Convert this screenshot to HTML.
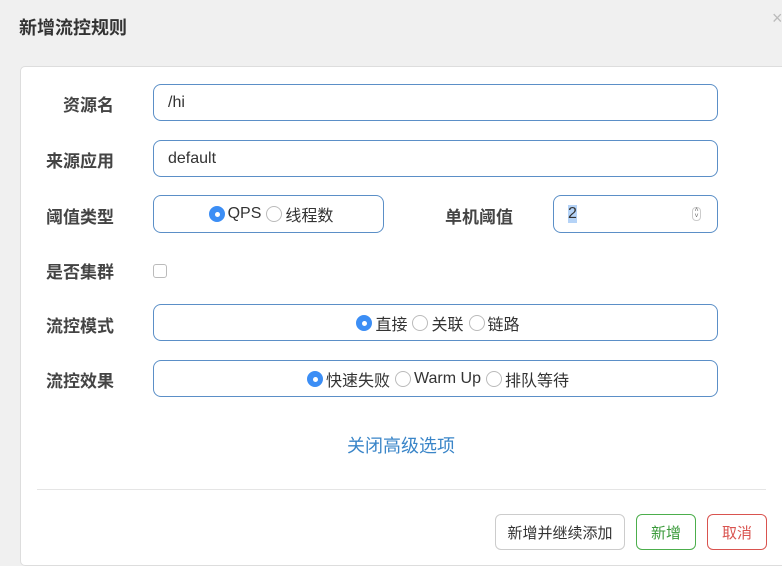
<!DOCTYPE html>
<html><head><meta charset="utf-8"><style>
*{box-sizing:border-box;margin:0;padding:0}
body{width:782px;height:561px;overflow:hidden;background:#f0f0f0;font-family:"Liberation Sans","Noto Sans CJK SC",sans-serif;position:relative;color:#333}
.a{position:absolute}
.title{left:19px;top:14px;font-size:18px;font-weight:bold;color:#333}
.panel{left:20px;top:66px;width:770px;height:500px;background:#fff;border:1px solid #ddd;border-radius:5px}
.lbl{font-size:17px;font-weight:bold;color:#444}
.box{border:1.5px solid #5b8fc7;border-radius:8px;background:#fff;font-size:16px;color:#333;display:flex;align-items:center}
.r{display:inline-block;width:16px;height:16px;border-radius:50%;border:1px solid #bbb;margin-right:3px;margin-left:5px;background:#fff;flex:none}
.r.on{background:#3c8ef5;border-color:#3c8ef5;position:relative}
.r.on:after{content:"";position:absolute;left:5px;top:5px;width:5px;height:5px;border-radius:50%;background:#fff}
.btn{border-radius:6px;font-size:15px;display:flex;align-items:center;justify-content:center;background:#fff}
</style></head><body>
<div class="a title">新增流控规则</div>
<div class="a" style="left:772px;top:8px;color:#bbb;font-size:18px">×</div>
<div class="a panel"></div>
<div class="a lbl" style="left:63px;top:91px">资源名</div>
<div class="a box" style="left:153px;top:84px;width:565px;height:37px;padding-left:14px">/hi</div>
<div class="a lbl" style="left:46px;top:147px">来源应用</div>
<div class="a box" style="left:153px;top:140px;width:565px;height:37px;padding-left:14px">default</div>
<div class="a lbl" style="left:46px;top:203px">阈值类型</div>
<div class="a box" style="left:153px;top:195px;width:231px;height:38px;justify-content:center"><span class="r on"></span>QPS <span class="r"></span>线程数</div>
<div class="a lbl" style="left:445px;top:203px">单机阈值</div>
<div class="a box" style="left:553px;top:195px;width:165px;height:38px;padding-left:14px"><span style="background:#b5d3f7">2</span><span style="position:absolute;right:16px;top:11px;width:9px;height:14px;border:1px solid #ccc;border-radius:4px;font-size:7px;line-height:6px;text-align:center;color:#666">˄<br>˅</span></div>
<div class="a lbl" style="left:46px;top:258px">是否集群</div>
<div class="a" style="left:153px;top:264px;width:14px;height:14px;border:1px solid #bbb;border-radius:3px"></div>
<div class="a lbl" style="left:46px;top:312px">流控模式</div>
<div class="a box" style="left:153px;top:304px;width:565px;height:37px;justify-content:center"><span class="r on"></span>直接 <span class="r"></span>关联 <span class="r"></span>链路</div>
<div class="a lbl" style="left:46px;top:367px">流控效果</div>
<div class="a box" style="left:153px;top:360px;width:565px;height:37px;justify-content:center"><span class="r on"></span>快速失败 <span class="r"></span>Warm Up <span class="r"></span>排队等待</div>
<div class="a" style="left:347px;top:432px;font-size:18px;color:#3a85c8">关闭高级选项</div>
<div class="a" style="left:37px;top:489px;width:729px;height:1px;background:#e5e5e5"></div>
<div class="a btn" style="left:495px;top:514px;width:130px;height:36px;border:1px solid #ccc;color:#333">新增并继续添加</div>
<div class="a btn" style="left:636px;top:514px;width:60px;height:36px;border:1px solid #4cae4c;color:#3a9a3a">新增</div>
<div class="a btn" style="left:707px;top:514px;width:60px;height:36px;border:1px solid #d9534f;color:#d9534f">取消</div>
</body></html>
